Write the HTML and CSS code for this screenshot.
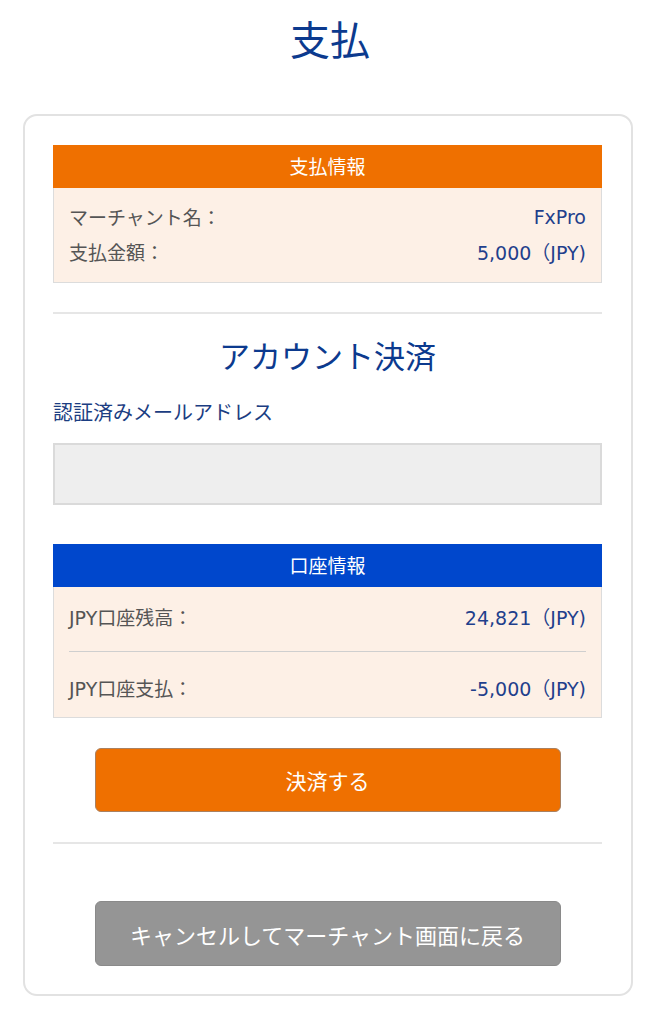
FILE: index.html
```html
<!DOCTYPE html>
<html lang="ja">
<head>
<meta charset="utf-8">
<title>支払</title>
<link rel="stylesheet" href="styles.css">
</head>
<body>
<h1 class="page-title">支払</h1>
<div class="card">
  <section class="info-box">
    <div class="info-head head-orange">支払情報</div>
    <div class="info-body pay-body">
      <div class="row"><span class="label">マーチャント名：</span><span class="value">FxPro</span></div>
      <div class="row"><span class="label">支払金額：</span><span class="value">5,000（JPY)</span></div>
    </div>
  </section>
  <hr class="divider">
  <h2 class="section-title">アカウント決済</h2>
  <div class="field-label">認証済みメールアドレス</div>
  <div class="field-input"></div>
  <section class="info-box account-box">
    <div class="info-head head-blue">口座情報</div>
    <div class="info-body acct-body">
      <div class="row acct-row"><span class="label">JPY口座残高：</span><span class="value">24,821（JPY)</span></div>
      <div class="row-sep"></div>
      <div class="row acct-row"><span class="label">JPY口座支払：</span><span class="value">-5,000（JPY)</span></div>
    </div>
  </section>
  <button class="btn btn-pay" type="button">決済する</button>
  <hr class="divider divider-2">
  <button class="btn btn-cancel" type="button">キャンセルしてマーチャント画面に戻る</button>
</div>
</body>
</html>
```
FILE: styles.css
```css
* { box-sizing: border-box; }
html, body { margin: 0; padding: 0; background: #fff; }
body {
  font-family: "Noto Sans CJK JP", "Noto Sans", sans-serif;
  color: #555;
  padding-bottom: 28px;
}
.page-title {
  margin: 0;
  padding-top: 10px;
  height: 114px;
  font-size: 40px;
  line-height: 56px;
  font-weight: 400;
  text-align: center;
  color: #0c3a8e;
}
.card {
  margin-left: 23px;
  width: 610px;
  border: 2px solid #e2e2e2;
  border-radius: 14px;
  padding: 29px 29px 28px 28px;
}
.info-box {
  border: 1px solid #dcdcdc;
}
.info-head {
  height: 43px;
  line-height: 42px;
  text-align: center;
  color: #fff;
  font-size: 19px;
  margin: -1px -1px 0 -1px;
}
.head-orange { background: #ef7000; }
.head-blue { background: #0047cc; }
.info-body {
  background: #fdf0e6;
  padding: 0 15px;
}
.pay-body { padding-top: 11px; padding-bottom: 13px; }
.row {
  display: flex;
  justify-content: space-between;
  align-items: center;
  height: 35px;
  font-size: 19px;
  font-family: "DejaVu Sans", "Noto Sans CJK JP", sans-serif;
}
.label { color: #555; }
.value { color: #1f3f8c; }
.divider {
  border: 0;
  height: 2px;
  background: #e6e6e6;
  margin: 29px 0 0 0;
}
.section-title {
  margin: 19px 0 0 0;
  font-size: 31px;
  line-height: 44px;
  font-weight: 400;
  text-align: center;
  color: #0c3a8e;
}
.field-label {
  margin-top: 21px;
  font-size: 20px;
  line-height: 28px;
  color: #1b3d82;
}
.field-input {
  margin-top: 17px;
  height: 62px;
  background: #eeeeee;
  border: 2px solid #dadada;
}
.account-box { margin-top: 39px; }
.acct-body { padding-top: 9px; padding-bottom: 10px; }
.acct-row { height: 40px; }
.row-sep {
  height: 1px;
  background: #cfcfcf;
  margin: 15px 0;
}
.btn {
  display: block;
  margin: 0 auto;
  width: 466px;
  font-family: inherit;
  font-size: 21px;
  color: #fff;
  border-radius: 6px;
  cursor: pointer;
}
.btn-pay {
  margin-top: 30px;
  height: 64px;
  background: #ef7000;
  border: 1px solid #a98161;
}
.divider-2 { margin-top: 30px; }
.btn-cancel {
  margin-top: 57px;
  height: 65px;
  background: #959595;
  border: 1px solid #8a8a8a;
  font-size: 22px;
}
```
